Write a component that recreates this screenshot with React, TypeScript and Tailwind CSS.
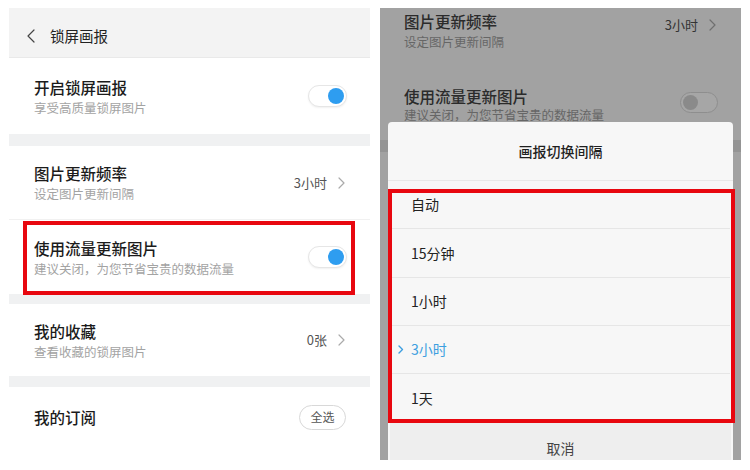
import React from "react";

const FONT = "font-['Noto_Sans_CJK_SC','Noto_Sans',sans-serif]";

function Chevron({ className = "" }: { className?: string }) {
  return (
    <svg width="7" height="12" viewBox="0 0 7 12" className={className} fill="none">
      <path d="M1 1l5 5-5 5" stroke="currentColor" strokeWidth="1.2" strokeLinecap="round" strokeLinejoin="round" />
    </svg>
  );
}

function Toggle() {
  return (
    <div className="w-[39px] h-[22px] rounded-full bg-white border border-[#e6e6e6] shadow-[0_1px_2px_rgba(0,0,0,0.06)] flex items-center justify-end pr-[2px]">
      <div className="w-[16px] h-[16px] rounded-full bg-[#2e9df0]" />
    </div>
  );
}

function TextBlock({ title, sub }: { title: string; sub?: string }) {
  return (
    <div className="flex flex-col">
      <span className="text-[15.5px] leading-[20px] text-[#1b1b1b] font-medium">{title}</span>
      {sub && <span className="text-[12.5px] leading-[17px] mt-[2px] text-[#a3a3a3]">{sub}</span>}
    </div>
  );
}

function Separator({ h }: { h: string }) {
  return <div className={`${h} bg-[#f0f1f2]`} />;
}

function LeftPanel() {
  return (
    <div className="w-[361px] h-[462px] bg-white flex flex-col overflow-hidden">
      <div className="h-[50px] bg-[#f3f3f3] border-b border-[#e9e9e9] flex items-center pl-[18px] pt-[6px]">
        <svg width="8" height="14" viewBox="0 0 8 14" fill="none" className="text-[#444]">
          <path d="M7 1L1 7l6 6" stroke="currentColor" strokeWidth="1.2" strokeLinecap="round" strokeLinejoin="round" />
        </svg>
        <span className="ml-[15px] text-[14.5px] text-[#222]">锁屏画报</span>
      </div>

      <div className="h-[76px] flex items-center justify-between pl-[25px] pr-[23px]">
        <TextBlock title="开启锁屏画报" sub="享受高质量锁屏图片" />
        <Toggle />
      </div>

      <Separator h="h-[12px]" />

      <div className="h-[74px] flex items-center justify-between pl-[25px] pr-[25px] border-b border-[#f1f1f1]">
        <TextBlock title="图片更新频率" sub="设定图片更新间隔" />
        <div className="flex items-center gap-[11px] text-[#555]">
          <span className="text-[13px]">3小时</span>
          <Chevron className="text-[#aaa]" />
        </div>
      </div>

      <div className="relative h-[74px] flex items-center justify-between pl-[25px] pr-[23px]">
        <TextBlock title="使用流量更新图片" sub="建议关闭，为您节省宝贵的数据流量" />
        <Toggle />
        <div className="absolute left-[14px] right-[15px] top-[1px] bottom-[-1px] border-[4px] border-[#e8070f] pointer-events-none" />
      </div>

      <Separator h="h-[10px]" />

      <div className="h-[72px] flex items-center justify-between pl-[25px] pr-[25px]">
        <TextBlock title="我的收藏" sub="查看收藏的锁屏图片" />
        <div className="flex items-center gap-[11px] text-[#555]">
          <span className="text-[13px]">0张</span>
          <Chevron className="text-[#aaa]" />
        </div>
      </div>

      <Separator h="h-[11px]" />

      <div className="h-[60px] flex items-center justify-between pl-[25px] pr-[24px]">
        <TextBlock title="我的订阅" />
        <div className="w-[47px] h-[25px] rounded-full border border-[#d8d8d8] flex items-center justify-center text-[12px] text-[#555]">
          全选
        </div>
      </div>
    </div>
  );
}

const OPTIONS = ["自动", "15分钟", "1小时", "3小时", "1天"];
const OPTION_HEIGHTS = ["h-[48px]", "h-[49px]", "h-[48px]", "h-[48px]", "h-[49px]"];

function RightPanel() {
  return (
    <div className="relative w-[361px] h-[452px] bg-[#a2a2a2] overflow-hidden flex flex-col">
      {/* dimmed settings list behind the dialog */}
      <div className="h-[60px] flex items-start justify-between pl-[24px] pr-[25px] pt-[3px]">
        <div className="flex flex-col">
          <span className="text-[15.5px] leading-[20px] text-[#2b2b2b] font-medium">图片更新频率</span>
          <span className="text-[12.5px] leading-[17px] mt-[2px] text-[#666]">设定图片更新间隔</span>
        </div>
        <div className="flex items-center gap-[11px] text-[#333] mt-[4px]">
          <span className="text-[13px]">3小时</span>
          <Chevron className="text-[#6f6f6f]" />
        </div>
      </div>
      <div className="h-[72px] flex items-start justify-between pl-[24px] pr-[23px] pt-[18px]">
        <div className="flex flex-col">
          <span className="text-[15.5px] leading-[20px] text-[#2b2b2b] font-medium">使用流量更新图片</span>
          <span className="text-[12.5px] leading-[17px] mt-[0px] text-[#666]">建议关闭，为您节省宝贵的数据流量</span>
        </div>
        <div className="w-[38px] h-[21px] rounded-full border border-[#8e8e8e] bg-[#a6a6a6] flex items-center pl-[2px] mt-[6px]">
          <div className="w-[15px] h-[15px] rounded-full bg-[#8a8a8a]" />
        </div>
      </div>
      <div className="h-[12px] bg-[#949494]" />

      {/* dialog */}
      <div className="absolute left-[8px] right-[8px] top-[114px] bottom-0 bg-[#f7f7f7] rounded-t-[4px] flex flex-col">
        <div className="h-[59px] shrink-0 flex items-center justify-center border-b border-[#e8e8e8]">
          <span className="text-[14px] font-medium text-[#1f1f1f]">画报切换间隔</span>
        </div>
        <div className="relative flex flex-col shrink-0">
          {OPTIONS.map((o, i) => {
            const selected = o === "3小时";
            const last = i === OPTIONS.length - 1;
            return (
              <div
                key={o}
                className={`${OPTION_HEIGHTS[i]} relative flex items-center ${
                  last ? "pl-[23px]" : "border-b border-[#e6e6e6] mx-[3px] pl-[20px]"
                }`}
              >
                {selected && (
                  <svg width="6" height="9" viewBox="0 0 6 9" fill="none" className="absolute left-[7px] text-[#3c9ee0]">
                    <path d="M1 1l3.5 3.5L1 8" stroke="currentColor" strokeWidth="1.4" strokeLinecap="round" strokeLinejoin="round" />
                  </svg>
                )}
                <span className={`text-[14px] ${selected ? "text-[#3d9fe0]" : "text-[#222]"}`}>{o}</span>
              </div>
            );
          })}
          <div className="absolute left-0 right-[-2px] top-[8px] bottom-0 border-[4px] border-[#e8070f] pointer-events-none" />
        </div>
        <div className="flex-1 bg-[#eeeeee] mx-[2px] flex items-start justify-center pt-[15px]">
          <span className="text-[14px] text-[#444]">取消</span>
        </div>
      </div>
    </div>
  );
}

export default function App() {
  return (
    <div className={`w-[750px] h-[470px] bg-white overflow-hidden flex gap-[10px] pl-[9px] pt-[8px] ${FONT}`}>
      <LeftPanel />
      <RightPanel />
    </div>
  );
}
